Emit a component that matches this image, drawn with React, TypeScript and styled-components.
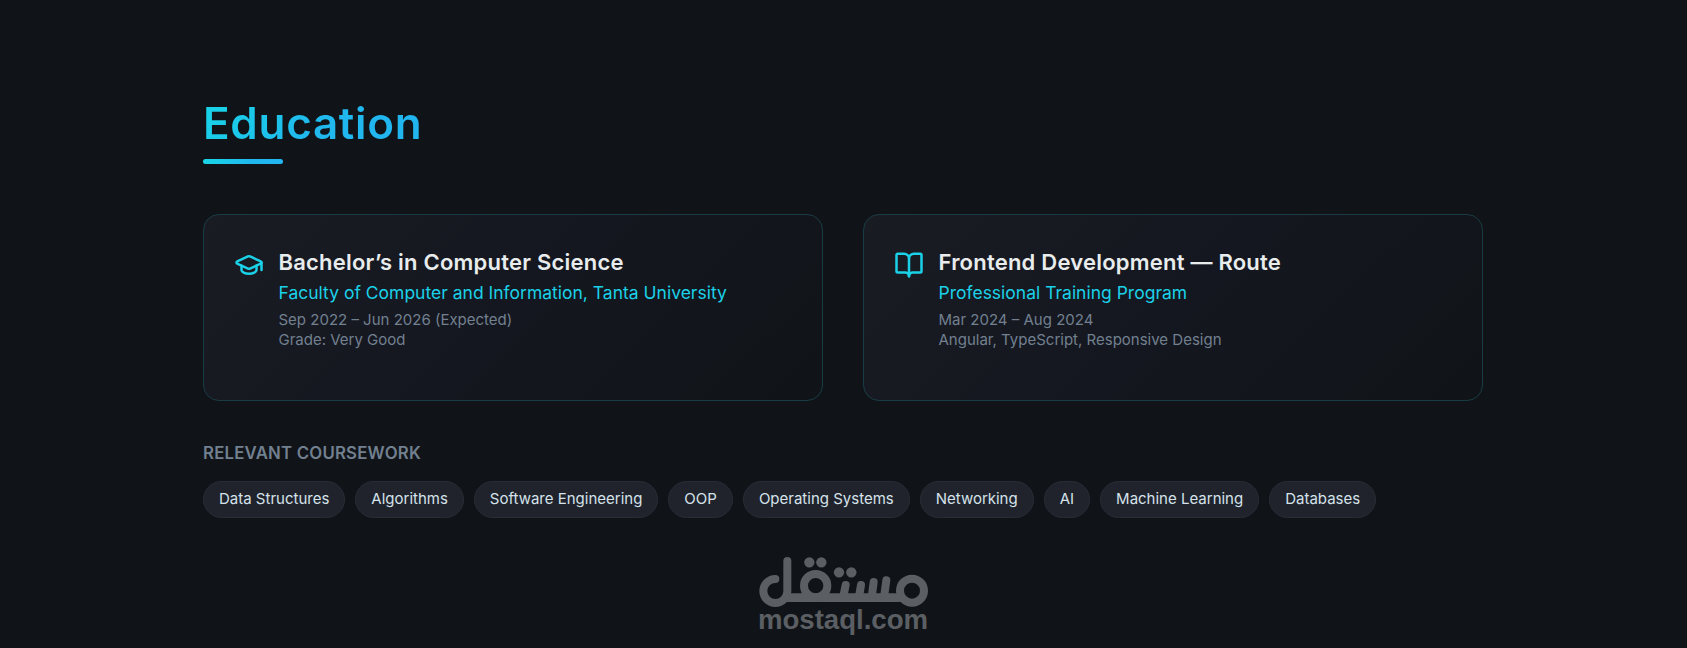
import React from "react";
import styled, { createGlobalStyle } from "styled-components";
import { BookOpen, GraduationCap, type LucideIcon } from "lucide-react";

interface EducationItem {
  icon: LucideIcon;
  title: string;
  place: string;
  period: string;
  note: string;
}

const education: EducationItem[] = [
  {
    icon: GraduationCap,
    title: "Bachelor’s in Computer Science",
    place: "Faculty of Computer and Information, Tanta University",
    period: "Sep 2022 – Jun 2026 (Expected)",
    note: "Grade: Very Good",
  },
  {
    icon: BookOpen,
    title: "Frontend Development — Route",
    place: "Professional Training Program",
    period: "Mar 2024 – Aug 2024",
    note: "Angular, TypeScript, Responsive Design",
  },
];

const coursework = [
  "Data Structures",
  "Algorithms",
  "Software Engineering",
  "OOP",
  "Operating Systems",
  "Networking",
  "AI",
  "Machine Learning",
  "Databases",
];

const GlobalStyle = createGlobalStyle`
  * {
    box-sizing: border-box;
  }

  body {
    margin: 0;
    background: #101418;
    font-family: Inter, "Liberation Sans", sans-serif;
  }
`;

const Section = styled.section`
  min-height: 100vh;
  padding: 95px 204px 0 203px;
  background: #101418;
`;

const Heading = styled.h2`
  width: fit-content;
  margin: 0;
  font-size: 44px;
  font-weight: 600;
  line-height: 56px;
  letter-spacing: 0.7px;
  color: transparent;
  background: linear-gradient(135deg, #18d6e6, #20b8ee 55%, #22b4f0);
  background-clip: text;
  -webkit-background-clip: text;
`;

const Underline = styled.div`
  width: 80px;
  height: 5px;
  margin-top: 8px;
  border-radius: 3px;
  background: linear-gradient(90deg, #18d6e6, #20b8ee 60%, #22b4f0);
`;

const Cards = styled.div`
  display: grid;
  grid-template-columns: repeat(2, 1fr);
  gap: 40px;
  margin-top: 50px;
`;

const Card = styled.article`
  display: flex;
  align-items: flex-start;
  gap: 14.5px;
  min-height: 187px;
  padding: 31px 30px;
  border: 1px solid #193c44;
  border-radius: 16px;
  background: linear-gradient(135deg, #1a1c24, #14171f 50%, #101418);

  svg {
    flex: none;
    margin-top: 4px;
    color: #1bd1e8;
  }
`;

const CardTitle = styled.h3`
  margin: 0;
  font-size: 22px;
  font-weight: 600;
  line-height: 32px;
  letter-spacing: 0.22px;
  color: #e8eced;
`;

const Place = styled.p`
  margin: 0 0 3px;
  font-size: 17.5px;
  line-height: 29px;
  color: #1bd1e8;
`;

const Meta = styled.p`
  margin: 0;
  font-size: 15px;
  line-height: 20px;
  color: #728090;
`;

const SubHeading = styled.h4`
  margin: 39px 0 15px;
  font-size: 16.8px;
  font-weight: 600;
  line-height: 26px;
  letter-spacing: 0.2px;
  text-transform: uppercase;
  color: #728090;
`;

const Chips = styled.div`
  display: flex;
  flex-wrap: wrap;
  gap: 10px;
`;

const Chip = styled.span`
  padding: 7px 15px 8px;
  border: 1px solid #272c36;
  border-radius: 20px;
  background: #20232c;
  font-size: 15px;
  line-height: 20px;
  color: #d5e2ea;
`;

const Brand = styled.footer`
  display: flex;
  flex-direction: column;
  align-items: center;
  margin-top: 38px;
  color: #5b5f63;
`;

const BrandName = styled.div`
  margin-top: -3px;
  font-family: "Liberation Sans", Arial, sans-serif;
  font-size: 27.6px;
  font-weight: 700;
  line-height: 30px;
`;

function BrandMark() {
  return (
    <svg
      width="170"
      height="52"
      viewBox="39 33 510 156"
      fill="none"
      stroke="currentColor"
      strokeWidth="24"
      strokeLinecap="round"
      role="img"
      aria-label="مستقل"
    >
      <path d="M127 48V138A36 36 0 1 1 91 102" />
      <path d="M127 158H462" strokeWidth="26" />
      <circle cx="212" cy="122" r="35" />
      <circle cx="501" cy="137" r="36" />
      <path d="M302 120L296 150M348 120L343 150M386 111L381 150M424 106L418 150" />
      <g fill="currentColor" stroke="none">
        <circle cx="193" cy="52" r="15.5" />
        <circle cx="229" cy="52" r="15.5" />
        <circle cx="282" cy="82" r="15.5" />
        <circle cx="319" cy="82" r="15.5" />
      </g>
    </svg>
  );
}

export default function App() {
  return (
    <>
      <GlobalStyle />
      <Section>
        <Heading>Education</Heading>
        <Underline />
        <Cards>
          {education.map(({ icon: Icon, ...item }) => (
            <Card key={item.title}>
              <Icon size={30} />
              <div>
                <CardTitle>{item.title}</CardTitle>
                <Place>{item.place}</Place>
                <Meta>{item.period}</Meta>
                <Meta>{item.note}</Meta>
              </div>
            </Card>
          ))}
        </Cards>
        <SubHeading>Relevant Coursework</SubHeading>
        <Chips>
          {coursework.map((name) => (
            <Chip key={name}>{name}</Chip>
          ))}
        </Chips>
        <Brand>
          <BrandMark />
          <BrandName>mostaql.com</BrandName>
        </Brand>
      </Section>
    </>
  );
}
